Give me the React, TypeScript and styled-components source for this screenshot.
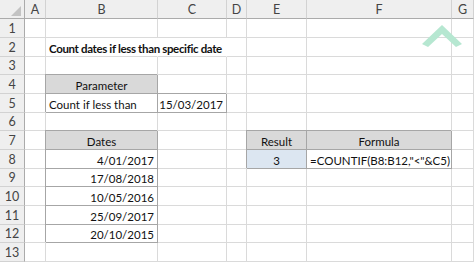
import React from 'react'
import styled, { createGlobalStyle, css } from 'styled-components'

const GlobalStyle = createGlobalStyle`
  html, body {
    margin: 0;
    padding: 0;
    background: #fff;
  }
  body {
    font-family: Lato, 'Liberation Sans', sans-serif;
  }
`

const GRID = '#dadada'
const EDGE = '#a6a6a6'
const HEAD_BG = '#efefef'

// widths incl. the 1px right border, row header first
const COLS = [25, 21, 112, 69, 20, 60, 145, 22]
const LETTERS = ['A', 'B', 'C', 'D', 'E', 'F', 'G']
const ROW_HEIGHTS = [19, 19, 18, 19, 19, 18, 19, 19, 18, 19, 19, 18, 19]

type Kind = 'plain' | 'head' | 'box' | 'result'
type Align = 'left' | 'center' | 'right'

interface CellDef {
  text?: string
  kind?: Kind
  align?: Align
  bold?: boolean
  open?: boolean
}

const CELLS: Record<string, CellDef> = {
  B2: { text: 'Count dates if less than specific date', bold: true, open: true },
  C2: { open: true },
  B4: { text: 'Parameter', kind: 'head' },
  B5: { text: 'Count if less than', kind: 'box' },
  C5: { text: '15/03/2017', kind: 'box', align: 'right' },
  B7: { text: 'Dates', kind: 'head' },
  E7: { text: 'Result', kind: 'head' },
  F7: { text: 'Formula', kind: 'head' },
  B8: { text: '4/01/2017', kind: 'box', align: 'right' },
  E8: { text: '3', kind: 'result' },
  F8: { text: '=COUNTIF(B8:B12,"<"&C5)', kind: 'box' },
  B9: { text: '17/08/2018', kind: 'box', align: 'right' },
  B10: { text: '10/05/2016', kind: 'box', align: 'right' },
  B11: { text: '25/09/2017', kind: 'box', align: 'right' },
  B12: { text: '20/10/2015', kind: 'box', align: 'right' },
}

const Frame = styled.div`
  position: relative;
  width: 474px;
  height: 263px;
  overflow: hidden;
  background: #fff;
`

const Sheet = styled.div`
  display: grid;
  grid-template-columns: ${COLS.map((w) => `${w}px`).join(' ')};
  grid-template-rows: 19px ${ROW_HEIGHTS.map((h) => `${h}px`).join(' ')};
`

const Corner = styled.div`
  position: relative;
  background: ${HEAD_BG};
  border-right: 1px solid #ababab;
  border-bottom: 1px solid #ababab;

  &::after {
    content: '';
    position: absolute;
    right: 3px;
    bottom: 2px;
    border-style: solid;
    border-width: 0 0 10px 10px;
    border-color: transparent transparent #c3c3c3 transparent;
  }
`

const ColHead = styled.div`
  display: flex;
  align-items: center;
  justify-content: center;
  background: ${HEAD_BG};
  border-right: 1px solid #d2d2d2;
  border-bottom: 1px solid #ababab;
  color: #444;
  font-size: 12.5px;
`

const RowHead = styled.div`
  display: flex;
  align-items: flex-end;
  justify-content: center;
  padding-bottom: 1px;
  background: ${HEAD_BG};
  border-right: 1px solid #ababab;
  border-bottom: 1px solid #d2d2d2;
  color: #444;
  font-size: 12.5px;
`

const FILL: Record<Kind, string> = {
  plain: 'transparent',
  head: '#d9d9d9',
  box: 'transparent',
  result: '#dce6f1',
}

const JUSTIFY: Record<Align, string> = {
  left: 'flex-start',
  center: 'center',
  right: 'flex-end',
}

const Cell = styled.div<{ $kind: Kind; $align: Align; $bold: boolean; $open: boolean }>`
  display: flex;
  align-items: flex-end;
  justify-content: ${(p) => JUSTIFY[p.$align]};
  padding: 0 3px 1px;
  white-space: nowrap;
  font-size: 11.5px;
  font-weight: ${(p) => (p.$bold ? 700 : 400)};
  letter-spacing: ${(p) => (p.$bold ? '-0.35px' : '0')};
  color: #111;
  background: ${(p) => FILL[p.$kind]};
  border-bottom: 1px solid ${GRID};
  border-right: 1px solid ${(p) => (p.$open ? 'transparent' : GRID)};

  ${(p) =>
    p.$kind !== 'plain' &&
    css`
      border-color: ${EDGE};
      box-shadow: -1px -1px 0 0 ${EDGE};
    `}
`

const Watermark = styled.svg`
  position: absolute;
  left: 419px;
  top: 20px;
`

export default function App() {
  return (
    <Frame>
      <GlobalStyle />
      <Sheet>
        <Corner />
        {LETTERS.map((l) => (
          <ColHead key={l}>{l}</ColHead>
        ))}
        {ROW_HEIGHTS.map((_, i) => {
          const row = i + 1
          return (
            <React.Fragment key={row}>
              <RowHead>{row}</RowHead>
              {LETTERS.map((l) => {
                const def = CELLS[`${l}${row}`] ?? {}
                const kind = def.kind ?? 'plain'
                const align = def.align ?? (kind === 'head' || kind === 'result' ? 'center' : 'left')
                return (
                  <Cell key={l} $kind={kind} $align={align} $bold={!!def.bold} $open={!!def.open}>
                    {def.text}
                  </Cell>
                )
              })}
            </React.Fragment>
          )
        })}
      </Sheet>
      <Watermark width="48" height="30" viewBox="0 0 48 30">
        <polygon points="3,24 23,5 43,24 37,27 23,14 9,27" fill="#b6e7d1" />
      </Watermark>
    </Frame>
  )
}
